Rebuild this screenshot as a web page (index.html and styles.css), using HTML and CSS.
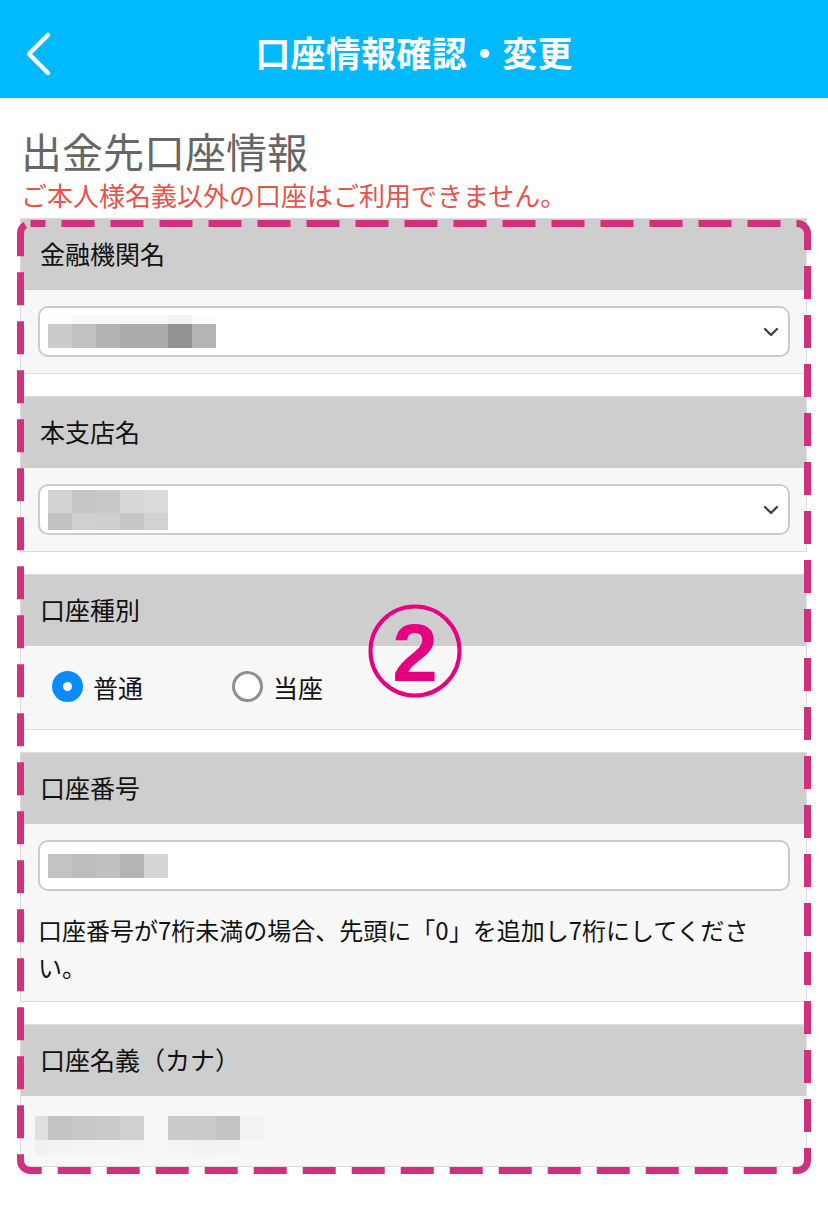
FILE: index.html
```html
<!DOCTYPE html>
<html lang="ja">
<head>
    <meta charset="UTF-8">
    <meta name="viewport" content="width=device-width, initial-scale=1.0">
    <title>口座情報確認・変更</title>
    <link rel="stylesheet" href="styles.css">
</head>
<body>
    <header class="topbar">
        <a href="javascript:history.back()" class="back-btn" aria-label="戻る">
            <svg width="30" height="46" viewBox="0 0 30 46">
                <polyline points="23,4 4,23 23,42" fill="none" stroke="#fff" stroke-width="4.5" stroke-linecap="round" stroke-linejoin="round"/>
            </svg>
        </a>
        <h1>口座情報確認・変更</h1>
    </header>

    <main class="content">
        <h2 class="page-title">出金先口座情報</h2>
        <p class="warning">ご本人様名義以外の口座はご利用できません。</p>

        <div class="frame">
            <!-- 金融機関名 -->
            <section class="field">
                <div class="field-head">金融機関名</div>
                <div class="field-body">
                    <div class="select">
                        <div class="mask">
                            <div class="mask-row h9">
                                <i class="g-fd"></i><i class="g-f8"></i><i class="g-f7"></i><i class="g-f7"></i><i class="g-f7"></i><i class="g-f3"></i><i class="g-fb"></i>
                            </div>
                            <div class="mask-row h24">
                                <i class="g-cb"></i><i class="g-c1"></i><i class="g-b3"></i><i class="g-ab"></i><i class="g-ab"></i><i class="g-93"></i><i class="g-b5"></i>
                            </div>
                        </div>
                        <svg class="chevron" width="16" height="10" viewBox="0 0 16 10">
                            <polyline points="2,2 8,8 14,2" fill="none" stroke="#3c4450" stroke-width="2.4" stroke-linecap="round" stroke-linejoin="round"/>
                        </svg>
                    </div>
                </div>
            </section>

            <!-- 本支店名 -->
            <section class="field">
                <div class="field-head">本支店名</div>
                <div class="field-body">
                    <div class="select">
                        <div class="mask">
                            <div class="mask-row h23">
                                <i class="g-d3"></i><i class="g-c6"></i><i class="g-c8"></i><i class="g-d7"></i><i class="g-dc"></i>
                            </div>
                            <div class="mask-row h17">
                                <i class="g-c2"></i><i class="g-d0"></i><i class="g-cf"></i><i class="g-c6"></i><i class="g-d2"></i>
                            </div>
                        </div>
                        <svg class="chevron" width="16" height="10" viewBox="0 0 16 10">
                            <polyline points="2,2 8,8 14,2" fill="none" stroke="#3c4450" stroke-width="2.4" stroke-linecap="round" stroke-linejoin="round"/>
                        </svg>
                    </div>
                </div>
            </section>

            <!-- 口座種別 -->
            <section class="field">
                <div class="field-head">口座種別</div>
                <div class="field-body radios">
                    <label class="radio">
                        <span class="radio-mark checked"></span>
                        <span>普通</span>
                    </label>
                    <label class="radio">
                        <span class="radio-mark"></span>
                        <span>当座</span>
                    </label>
                </div>
            </section>

            <!-- 口座番号 -->
            <section class="field">
                <div class="field-head">口座番号</div>
                <div class="field-body">
                    <div class="select">
                        <div class="mask">
                            <div class="mask-row h24">
                                <i class="g-c3"></i><i class="g-bd"></i><i class="g-c0"></i><i class="g-b5"></i><i class="g-d6"></i>
                            </div>
                        </div>
                    </div>
                    <p class="note">口座番号が7桁未満の場合、先頭に「0」を追加し7桁にしてください。</p>
                </div>
            </section>

            <!-- 口座名義（カナ） -->
            <section class="field">
                <div class="field-head">口座名義（カナ）</div>
                <div class="field-body name-body">
                    <div class="mask">
                        <div class="mask-row h24">
                            <i class="narrow g-e0"></i><i class="g-c3"></i><i class="g-c8"></i><i class="g-ca"></i><i class="g-d0"></i><i class="g-none"></i><i class="g-cb"></i><i class="g-cb"></i><i class="g-c3"></i><i class="g-f2"></i>
                        </div>
                        <div class="mask-row h15">
                            <i class="narrow g-f1"></i><i class="g-f3"></i><i class="g-f4"></i><i class="g-f4"></i><i class="g-f5"></i><i class="g-none"></i><i class="g-f5"></i><i class="g-f2"></i><i class="g-f3"></i><i class="g-none"></i>
                        </div>
                    </div>
                </div>
            </section>

            <svg class="frame-line" aria-hidden="true">
                <rect rx="10" ry="10"/>
            </svg>

            <svg class="step-mark" width="96" height="96" viewBox="0 0 96 96" aria-hidden="true">
                <circle cx="48" cy="48" r="44.5" fill="none" stroke="#e4007f" stroke-width="4"/>
                <text x="48" y="78" text-anchor="middle" class="step-num">2</text>
            </svg>
        </div>
    </main>
</body>
</html>
```

FILE: styles.css
```css
* { margin: 0; padding: 0; box-sizing: border-box; }

body {
    font-family: "Noto Sans CJK JP", "Noto Sans", sans-serif;
    background: #fff;
    color: #111;
}

.topbar {
    height: 98px;
    background: #00b9ff;
    display: flex;
    align-items: center;
    justify-content: center;
    position: relative;
}

.back-btn {
    position: absolute;
    left: 25px;
    top: 31px;
    display: block;
    width: 30px;
    height: 46px;
}

.back-btn svg { display: block; }

.topbar h1 {
    color: #fff;
    font-size: 35px;
    font-weight: 700;
    letter-spacing: 0.3px;
    line-height: 1;
    margin-top: 4px;
}

.content {
    padding: 28px 17px 38px;
}

.page-title {
    font-size: 41px;
    font-weight: 400;
    color: #666;
    line-height: 48px;
    padding-left: 4px;
}

.warning {
    font-size: 26px;
    color: #e5534b;
    line-height: 30px;
    padding-left: 4px;
    margin-top: 6px;
}

.frame {
    position: relative;
    margin-top: 8px;
    padding: 0 4px 7px 3px;
    display: flex;
    flex-direction: column;
    gap: 22px;
}

.frame-line {
    position: absolute;
    top: 2px;
    left: 0;
    width: 100%;
    height: calc(100% - 2px);
    pointer-events: none;
    overflow: visible;
}

.frame-line rect {
    x: 3.5px;
    y: 3.5px;
    width: calc(100% - 7px);
    height: calc(100% - 7px);
    fill: none;
    stroke: #d22f7f;
    stroke-width: 7;
    stroke-dasharray: 33 16;
    stroke-dashoffset: 18;
}

.step-mark {
    position: absolute;
    left: 350px;
    top: 385px;
}

.step-num {
    font-family: "Liberation Sans", Arial, sans-serif;
    font-weight: 700;
    font-size: 82px;
    fill: #e4007f;
}

.field {
    border: 1px solid #dcdcdc;
    background: #f7f7f7;
}

.field-head {
    height: 71px;
    background: #cecece;
    display: flex;
    align-items: center;
    padding: 0 0 4px 19px;
    font-size: 25px;
    color: #111;
}

.field-body {
    padding: 16px 16px 16px 17px;
}

.select {
    height: 51px;
    background: #fff;
    border: 2px solid #cbcbcb;
    border-radius: 10px;
    display: flex;
    align-items: center;
    justify-content: space-between;
    padding: 0 9px 0 8px;
}

.chevron { display: block; }

.mask {
    display: flex;
    flex-direction: column;
}

.mask-row {
    display: flex;
}

.mask-row i {
    display: block;
    width: 24px;
}

.mask-row i.narrow { width: 13px; }

.h9 { height: 9px; }
.h15 { height: 15px; }
.h17 { height: 17px; }
.h23 { height: 23px; }
.h24 { height: 24px; }

.g-93 { background: #939393; }
.g-ab { background: #ababab; }
.g-b3 { background: #b3b3b3; }
.g-b5 { background: #b5b5b5; }
.g-bd { background: #bdbdbd; }
.g-c0 { background: #c0c0c0; }
.g-c1 { background: #c1c1c1; }
.g-c2 { background: #c2c2c2; }
.g-c3 { background: #c3c3c3; }
.g-c6 { background: #c6c6c6; }
.g-c8 { background: #c8c8c8; }
.g-ca { background: #cacaca; }
.g-cb { background: #cbcbcb; }
.g-cf { background: #cfcfcf; }
.g-d0 { background: #d0d0d0; }
.g-d2 { background: #d2d2d2; }
.g-d3 { background: #d3d3d3; }
.g-d6 { background: #d6d6d6; }
.g-d7 { background: #d7d7d7; }
.g-dc { background: #dcdcdc; }
.g-e0 { background: #e0e0e0; }
.g-f1 { background: #f1f1f1; }
.g-f2 { background: #f2f2f2; }
.g-f3 { background: #f3f3f3; }
.g-f4 { background: #f4f4f4; }
.g-f5 { background: #f5f5f5; }
.g-f7 { background: #f7f7f7; }
.g-f8 { background: #f8f8f8; }
.g-fb { background: #fbfbfb; }
.g-fd { background: #fdfdfd; }
.g-none { background: transparent; }

.radios {
    height: 83px;
    display: flex;
    align-items: center;
    padding: 0 0 2px 31px;
}

.radio {
    width: 180px;
    display: flex;
    align-items: center;
    gap: 10px;
    font-size: 25px;
}

.radio-mark {
    width: 31px;
    height: 31px;
    border-radius: 50%;
    border: 3px solid #8e8e8e;
    background: #fff;
    display: flex;
    align-items: center;
    justify-content: center;
}

.radio-mark.checked {
    border: none;
    background: #0a8cff;
}

.radio-mark.checked::after {
    content: "";
    width: 9px;
    height: 9px;
    border-radius: 50%;
    background: #fff;
}

.note {
    font-size: 24px;
    line-height: 37px;
    margin-top: 20px;
    color: #111;
}

.field-body.name-body {
    height: 70px;
    padding: 20px 0 0 14px;
}
```
